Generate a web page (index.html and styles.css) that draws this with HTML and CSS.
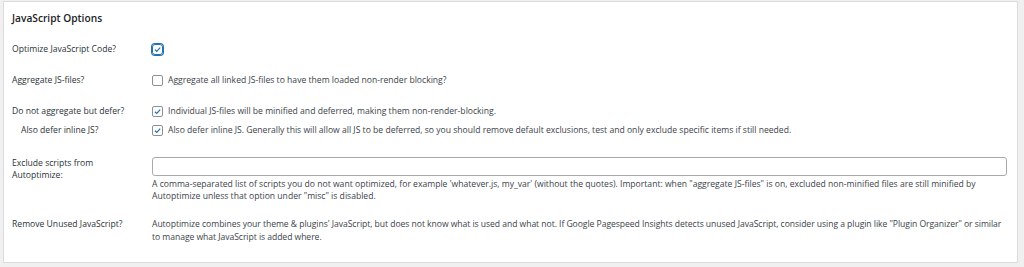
FILE: index.html
```html
<!DOCTYPE html>
<html lang="en">
<head>
<meta charset="UTF-8">
<title>JavaScript Options</title>
<link rel="stylesheet" href="styles.css">
</head>
<body>
<div class="postbox">
    <h2 class="box-title">JavaScript Options</h2>

    <div class="row first">
        <div class="lbl">Optimize JavaScript Code?</div>
        <div class="fld"><span class="cb focus"><svg viewBox="0 0 12 12"><path d="M2.6 6.3 L5 8.6 L9.6 3.4" /></svg></span></div>
    </div>

    <div class="row">
        <div class="lbl">Aggregate JS-files?</div>
        <div class="fld"><span class="cb"></span><span>Aggregate all linked JS-files to have them loaded non-render blocking?</span></div>
    </div>

    <div class="row tight-bottom">
        <div class="lbl">Do not aggregate but defer?</div>
        <div class="fld"><span class="cb"><svg viewBox="0 0 12 12"><path d="M2.6 6.3 L5 8.6 L9.6 3.4" /></svg></span><span>Individual JS-files will be minified and deferred, making them non-render-blocking.</span></div>
    </div>

    <div class="row sub">
        <div class="lbl">Also defer inline JS?</div>
        <div class="fld"><span class="cb"><svg viewBox="0 0 12 12"><path d="M2.6 6.3 L5 8.6 L9.6 3.4" /></svg></span><span>Also defer inline JS. Generally this will allow all JS to be deferred, so you should remove default exclusions, test and only exclude specific items if still needed.</span></div>
    </div>

    <div class="row exclude">
        <div class="lbl">Exclude scripts from Autoptimize:</div>
        <div class="fld col">
            <input type="text" class="txt" value="">
            <p class="desc narrow">A comma-separated list of scripts you do not want optimized, for example 'whatever.js, my_var' (without the quotes). Important: when "aggregate JS-files" is on, excluded non-minified files are still minified by Autoptimize unless that option under "misc" is disabled.</p>
        </div>
    </div>

    <div class="row last">
        <div class="lbl">Remove Unused JavaScript?</div>
        <div class="fld col">
            <p class="desc tight">Autoptimize combines your theme &amp; plugins' JavaScript, but does not know what is used and what not. If Google Pagespeed Insights detects unused JavaScript, consider using a plugin like "Plugin Organizer" or similar<br>to manage what JavaScript is added where.</p>
        </div>
    </div>
</div>
</body>
</html>
```

FILE: styles.css
```css
body {
    margin: 0;
    background-color: #f0f0f1;
    font-family: "Open Sans", "Noto Sans", Arial, sans-serif;
    font-size: 8.6px;
    line-height: 13px;
    color: #3c434a;
}

.postbox {
    margin: 1px 0 0 3px;
    width: 1015px;
    height: 262px;
    background-color: #fff;
    border: 1px solid #dcdcde;
    box-sizing: border-box;
    padding: 0 9px 0 8px;
}

.box-title {
    margin: 0;
    padding: 9px 0 0;
    font-size: 10.2px;
    line-height: 14px;
    font-weight: 600;
    color: #1d2327;
}

.row {
    display: grid;
    grid-template-columns: 140px 1fr;
    padding: 9px 0;
}
.row.first {
    padding-top: 18px;
}
.row.tight-bottom {
    padding-bottom: 3px;
}
.row.sub {
    padding: 3px 0 0;
}
.row.sub .lbl {
    padding-left: 9px;
}
.row.exclude {
    padding: 20px 0 0;
    line-height: 12px;
}
.row.last {
    padding: 16px 0 0;
}

.lbl {
    padding-right: 8px;
    color: #2c3338;
}

.fld {
    display: flex;
    align-items: center;
    gap: 5px;
}
.fld.col {
    flex-direction: column;
    align-items: stretch;
    gap: 2px;
}

.cb {
    width: 11px;
    height: 11px;
    border: 1px solid #8c8f94;
    border-radius: 2px;
    box-sizing: border-box;
    display: inline-flex;
    align-items: center;
    justify-content: center;
    flex: none;
}
.cb svg {
    width: 11px;
    height: 11px;
    fill: none;
    stroke: #2271b1;
    stroke-width: 1.6;
}
.cb.focus {
    border-color: #2271b1;
    box-shadow: 0 0 0 1px #2271b1;
    border-radius: 3px;
}

.txt {
    width: 855px;
    height: 19px;
    box-sizing: border-box;
    border: 1px solid #a7aaad;
    border-radius: 3px;
    margin: 0;
    padding: 0 6px;
    font: inherit;
}

.desc {
    margin: 0;
    padding-right: 2px;
    color: #3c434a;
}
.desc.narrow {
    max-width: 835px;
}
.desc.tight {
    letter-spacing: -0.05px;
    padding-right: 0;
}
```
